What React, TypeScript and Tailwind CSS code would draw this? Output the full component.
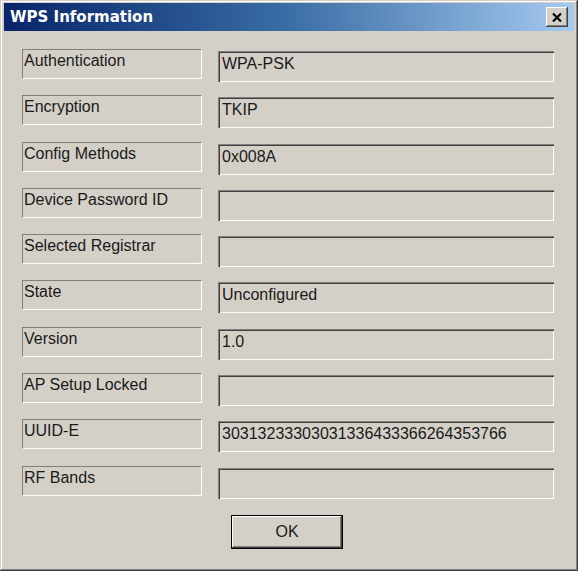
const rows: [string, string][] = [
  ["Authentication", "WPA-PSK"],
  ["Encryption", "TKIP"],
  ["Config Methods", "0x008A"],
  ["Device Password ID", ""],
  ["Selected Registrar", ""],
  ["State", "Unconfigured"],
  ["Version", "1.0"],
  ["AP Setup Locked", ""],
  ["UUID-E", "30313233303031336433366264353766"],
  ["RF Bands", ""],
];

function CloseButton() {
  return (
    <button className="w-[22px] h-[20px] bg-[#d4d0c8] flex items-center justify-center shadow-[inset_-1px_-1px_0_#404040,inset_1px_1px_0_#fff,inset_-2px_-2px_0_#808080]">
      <svg width="12" height="11" viewBox="0 0 12 11">
        <path d="M2 1.5 L10 9.5 M10 1.5 L2 9.5" stroke="#000" strokeWidth="2.2" />
      </svg>
    </button>
  );
}

export default function App() {
  return (
    <div
      className="w-[578px] h-[571px] bg-[#d4d0c8] p-[3px] flex flex-col shadow-[inset_-1px_-1px_0_#404040,inset_1px_1px_0_#d4d0c8,inset_-2px_-2px_0_#808080,inset_2px_2px_0_#fff]"
      style={{ fontFamily: '"Liberation Sans", Arial, sans-serif' }}
    >
      {/* title bar */}
      <div className="h-[28px] mx-[1px] flex items-center justify-between pl-[6px] pr-[6px] bg-gradient-to-r from-[#0a246a] via-[#3a6ea5] to-[#a6caf0]">
        <span
          className="text-white font-bold text-[15px] leading-none"
          style={{ fontFamily: '"DejaVu Sans", sans-serif' }}
        >
          WPS Information
        </span>
        <CloseButton />
      </div>

      {/* rows */}
      <div className="flex flex-col mt-[18px] pl-[19px]">
        {rows.map(([label, value]) => (
          <div key={label} className="flex items-start h-[46.3px]">
            <div className="w-[180px] h-[30px] border-t border-l border-[#808080] border-b-[#fff] border-r-[#fff] border-b border-r flex items-center pl-[1px] pb-[6px] text-[16px] text-[#1a1a1a] leading-none">
              {label}
            </div>
            <div className="ml-[16px] mt-[2px] w-[336px] h-[31px] flex items-center pl-[4px] pb-[5px] text-[16px] text-[#1a1a1a] leading-none shadow-[inset_1px_1px_0_#808080,inset_2px_2px_0_#404040,inset_-1px_-1px_0_#fff,inset_-2px_-2px_0_#d4d0c8]">
              {value}
            </div>
          </div>
        ))}
      </div>

      {/* OK */}
      <div className="flex pl-[228px] mt-[3px]">
        <button className="w-[112px] h-[34px] bg-[#d4d0c8] border border-black text-[16px] text-[#1a1a1a] flex items-center justify-center shadow-[inset_-1px_-1px_0_#404040,inset_1px_1px_0_#fff,inset_-2px_-2px_0_#808080]">
          OK
        </button>
      </div>
    </div>
  );
}
